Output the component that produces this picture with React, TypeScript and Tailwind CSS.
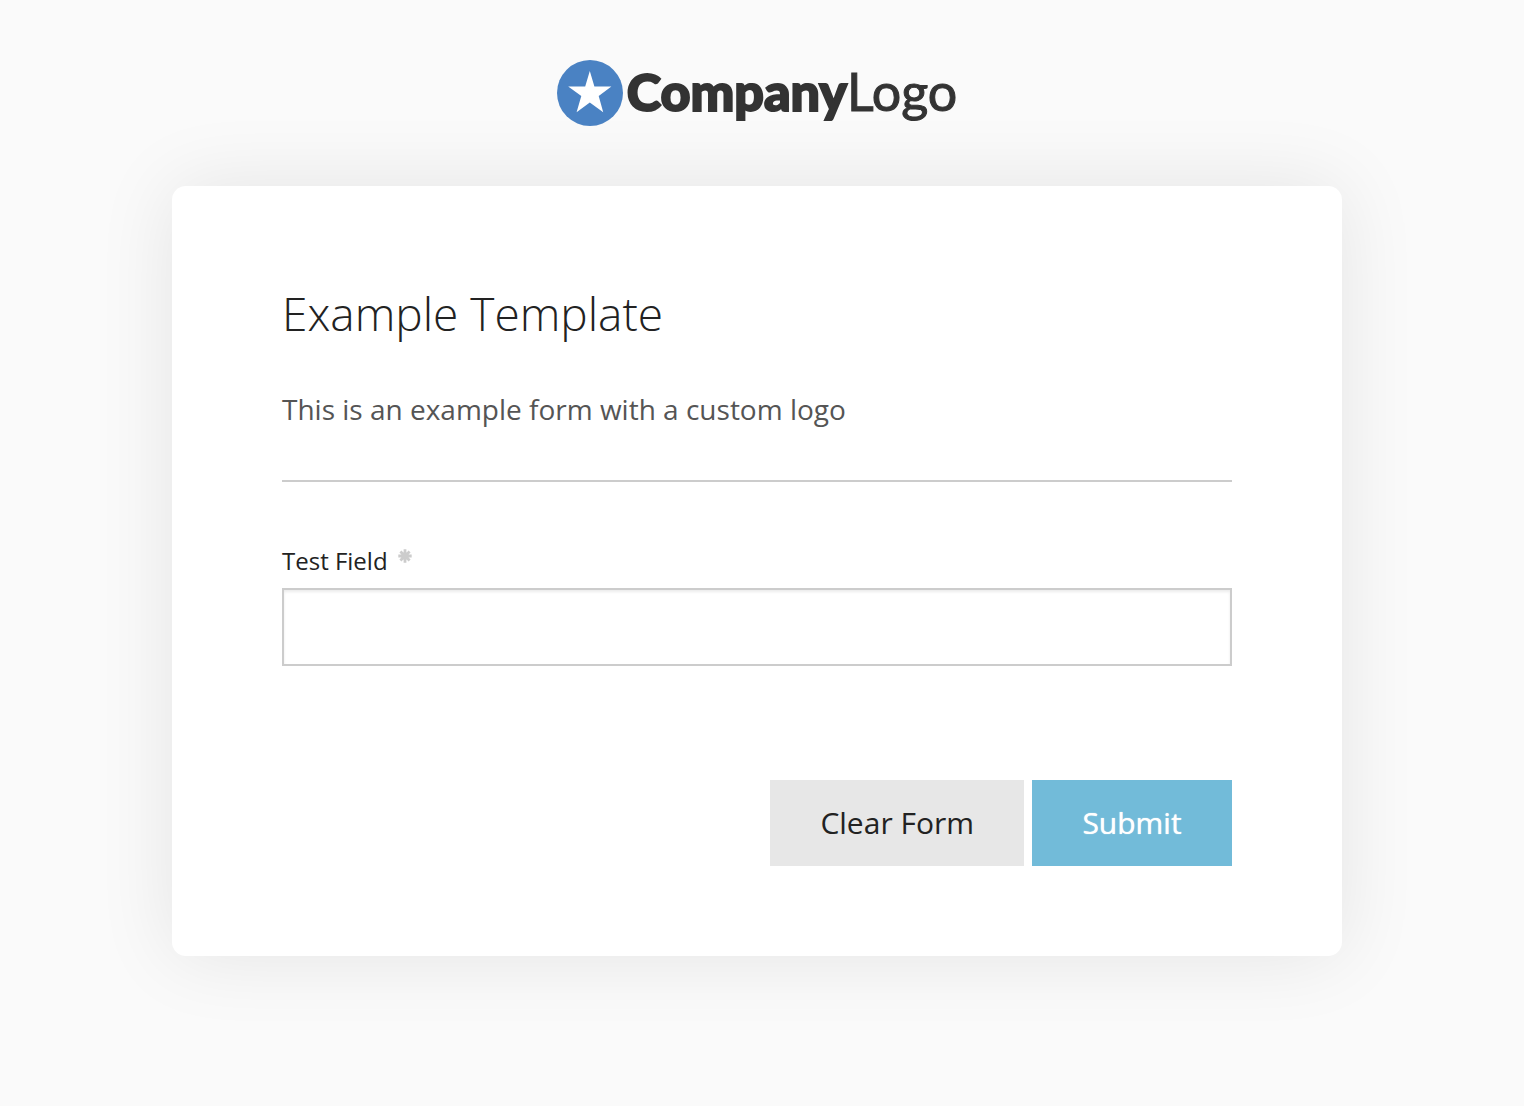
export default function App() {
  return (
    <div className="min-h-screen bg-[#fafafa] pt-[60px] pr-[182px] pb-[150px] pl-[172px] font-['Open_Sans',sans-serif] text-[#222]">
      <header className="flex h-[66px] items-center justify-center gap-1 text-[#333]">
        <svg viewBox="0 0 66 66" className="size-[66px]" aria-hidden="true">
          <circle cx="33" cy="33" r="33" fill="#4a82c3" />
          <polygon fill="#fff" points="32.8,11 37.4,26.4 54.4,26.4 41.7,36 46.2,52.2 32.8,42.4 19.6,52.2 24.3,36 11.2,26.4 28.2,26.4" />
        </svg>
        <div className="pb-1 font-['Lato',sans-serif] text-[52px] leading-[62px]">
          <span className="font-black [-webkit-text-stroke:2px_#333]">Company</span>
          <span className="[-webkit-text-stroke:1px_#333]">Logo</span>
        </div>
      </header>
      <main className="mt-[60px] rounded-[14px] bg-white px-[110px] py-[90px] shadow-[0_0_80px_rgba(0,0,0,0.09)]">
        <h1 className="text-[46px] leading-[74px] font-light">Example Template</h1>
        <p className="mt-[33px] text-[28px] leading-[52px] text-[#555]">This is an example form with a custom logo</p>
        <hr className="mt-[45px] border-t-2 border-[#ccc]" />
        <form>
          <label htmlFor="test" className="mt-[62px] flex text-[24px] leading-[34px]">
            Test Field
            <svg viewBox="0 0 14 14" className="mt-[5px] ml-[10px] size-[14px]" stroke="#ccc" strokeWidth="2.8" role="img" aria-label="required">
              <path d="M7 .3V13.7M.3 7H13.7M2.4 2.4L11.6 11.6M11.6 2.4L2.4 11.6" />
            </svg>
          </label>
          <input id="test" type="text" required className="mt-[10px] block h-[78px] w-full border-2 border-[#ccc] px-4 text-[28px] shadow-[inset_0_2px_3px_rgba(0,0,0,0.08)] outline-none" />
          <div className="mt-[114px] flex justify-end gap-2">
            <button type="reset" className="h-[86px] bg-[#e7e7e7] px-[50px] pb-[2px] text-[30px]">Clear Form</button>
            <button type="submit" className="h-[86px] min-w-[200px] bg-[#72bbd9] px-[48px] pb-[2px] text-[30px] text-white [text-shadow:0_0_1px_#fff]">Submit</button>
          </div>
        </form>
      </main>
    </div>
  );
}
